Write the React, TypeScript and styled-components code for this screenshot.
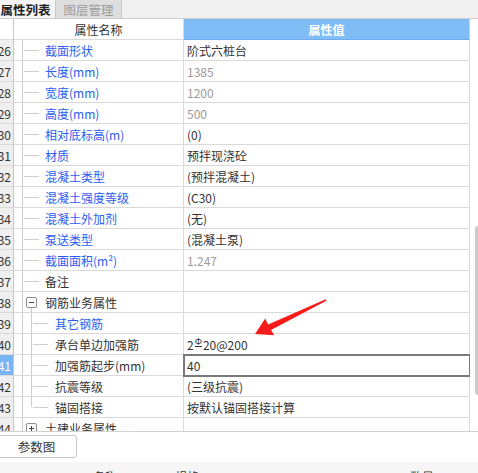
import React from 'react';
import styled, { createGlobalStyle, css } from 'styled-components';

const GRID = '#dadada';
const TREE = '#cdcdcd';

const GlobalStyle = createGlobalStyle`
  html, body {
    margin: 0;
    padding: 0;
    background: #fff;
  }
  body {
    font-family: "Microsoft YaHei", "Noto Sans CJK SC", "Noto Sans", sans-serif;
    font-size: 12px;
    color: #333;
  }
  * {
    box-sizing: border-box;
  }
`;

const Panel = styled.div`
  position: relative;
  width: 478px;
  height: 473px;
  overflow: hidden;
  display: flex;
  flex-direction: column;
  background: #fff;
`;

const TabBar = styled.div`
  flex: none;
  height: 19px;
  display: flex;
  background: #f0f0f0;
  border-bottom: 1px solid #cfcfcf;
`;

const Tab = styled.div<{ $active?: boolean }>`
  display: flex;
  align-items: center;
  justify-content: center;
  border-right: 1px solid #c9c9c9;
  font-size: 12.5px;
  white-space: nowrap;
  ${(p) =>
    p.$active
      ? css`
          width: 60px;
          margin-left: -4px;
          background: #f5f5f5;
          color: #222;
          font-weight: bold;
        `
      : css`
          width: 66px;
          background: #dedede;
          color: #9a9a9a;
        `}
`;

const Grid = styled.div`
  flex: none;
  height: 413px;
  display: flex;
  overflow: hidden;
  border-bottom: 1px solid #d2d2d2;
`;

const Rows = styled.div`
  width: 470px;
  flex: none;
  display: flex;
  flex-direction: column;
  overflow: hidden;
`;

const ScrollTrack = styled.div`
  width: 8px;
  flex: none;
  padding: 207px 0 0 5px;
`;

const ScrollThumb = styled.div`
  width: 4px;
  height: 169px;
  background: #cbcbcb;
  border-radius: 3px 0 0 3px;
`;

const Row = styled.div`
  flex: none;
  height: 21px;
  display: flex;
`;

const NumCell = styled.div<{ $selected?: boolean; $head?: boolean }>`
  width: 14px;
  flex: none;
  display: flex;
  align-items: center;
  justify-content: flex-end;
  padding-right: 2px;
  overflow: hidden;
  white-space: nowrap;
  border-right: 1px solid #c6c6c6;
  border-bottom: 1px solid ${GRID};
  background: ${(p) => (p.$head ? '#fff' : p.$selected ? '#79b5f3' : '#efefef')};
  color: ${(p) => (p.$selected ? '#fff' : '#333')};
`;

const NameHead = styled.div`
  width: 170px;
  flex: none;
  display: flex;
  align-items: center;
  justify-content: center;
  border-right: 1px solid ${GRID};
  border-bottom: 1px solid ${GRID};
  color: #333;
`;

const ValueHead = styled.div`
  width: 286px;
  flex: none;
  display: flex;
  align-items: center;
  justify-content: center;
  background: #80bdf7;
  color: #fff;
  font-weight: bold;
  border-right: 1px solid #d0d0d0;
  border-bottom: 1px solid #6eacee;
`;

const NameCell = styled.div`
  width: 170px;
  flex: none;
  display: flex;
  border-right: 1px solid ${GRID};
  border-bottom: 1px solid ${GRID};
  white-space: nowrap;
  overflow: hidden;
`;

const Indent = styled.span<{ $w: number; $guide?: boolean }>`
  flex: none;
  width: ${(p) => p.$w}px;
  ${(p) =>
    p.$guide &&
    css`
      background: linear-gradient(${TREE}, ${TREE}) 0 0 / 1px 100% no-repeat;
    `}
`;

const Elbow = styled.span<{ $w: number; $last?: boolean }>`
  flex: none;
  width: ${(p) => p.$w}px;
  background:
    linear-gradient(${TREE}, ${TREE}) 0 0 / 1px ${(p) => (p.$last ? '50%' : '100%')} no-repeat,
    linear-gradient(${TREE}, ${TREE}) 2px 50% / 15px 1px no-repeat;
`;

const GroupElbow = styled.span<{ $open?: boolean }>`
  flex: none;
  width: 23px;
  display: flex;
  align-items: center;
  padding-left: 4px;
  background: linear-gradient(${TREE}, ${TREE}) 0 0 / 1px 100% no-repeat
    ${(p) => (p.$open ? `, linear-gradient(${TREE}, ${TREE}) 9px 100% / 1px 50% no-repeat` : '')};
`;

const Toggle = styled.span<{ $open?: boolean }>`
  position: relative;
  width: 11px;
  height: 11px;
  border: 1px solid #8c8c8c;
  border-radius: 2px;
  background: #fff;
  &::before {
    content: '';
    position: absolute;
    left: 2px;
    right: 2px;
    top: 4px;
    height: 1px;
    background: #444;
  }
  ${(p) =>
    !p.$open &&
    css`
      &::after {
        content: '';
        position: absolute;
        top: 2px;
        bottom: 2px;
        left: 4px;
        width: 1px;
        background: #444;
      }
    `}
`;

const Label = styled.span<{ $blue?: boolean }>`
  display: flex;
  align-items: center;
  color: ${(p) => (p.$blue ? '#2b5df2' : '#333')};
`;

const ValueCell = styled.div<{ $muted?: boolean; $editing?: boolean }>`
  width: 286px;
  flex: none;
  display: flex;
  align-items: center;
  padding-left: 3px;
  white-space: nowrap;
  border-right: 1px solid ${GRID};
  border-bottom: 1px solid ${GRID};
  color: ${(p) => (p.$muted ? '#9b9b9b' : '#333')};
  ${(p) =>
    p.$editing &&
    css`
      position: relative;
      z-index: 1;
      outline: 2px solid #7a7a7a;
      outline-offset: -1px;
    `}
`;

// 三级钢符号：小号的Φ，底部加一横
const Rebar = styled.span`
  font-size: 9px;
  line-height: 9px;
  margin: 0 1px;
  position: relative;
  top: -2px;
  border-bottom: 1px solid currentColor;
`;

const ButtonBar = styled.div`
  flex: none;
  height: 30px;
  padding-top: 3px;
  background: #fff;
`;

const Button = styled.div`
  width: 81px;
  height: 23px;
  margin-left: -4px;
  display: flex;
  align-items: center;
  justify-content: center;
  border: 1px solid #c8c8c8;
  border-radius: 3px;
  font-size: 12.5px;
  color: #333;
  background: #fff;
`;

const Strip = styled.div`
  flex: 1;
  display: flex;
  padding-top: 8px;
  line-height: 14px;
  background: #f6f6f6;
  color: #333;
  overflow: hidden;
`;

const StripLabel = styled.span<{ $at: number }>`
  flex: none;
  width: ${(p) => p.$at}px;
  white-space: nowrap;
`;

const Overlay = styled.svg`
  position: absolute;
  left: 0;
  top: 0;
  pointer-events: none;
`;

type Kind = 'leaf' | 'group' | 'child';

interface Attr {
  no: number;
  name: string;
  blue?: boolean;
  value?: React.ReactNode;
  muted?: boolean;
  kind: Kind;
  open?: boolean;
  last?: boolean;
  selected?: boolean;
  editing?: boolean;
}

const attrs: Attr[] = [
  { no: 26, name: '截面形状', blue: true, value: '阶式六桩台', kind: 'leaf' },
  { no: 27, name: '长度(mm)', blue: true, value: '1385', muted: true, kind: 'leaf' },
  { no: 28, name: '宽度(mm)', blue: true, value: '1200', muted: true, kind: 'leaf' },
  { no: 29, name: '高度(mm)', blue: true, value: '500', muted: true, kind: 'leaf' },
  { no: 30, name: '相对底标高(m)', blue: true, value: '(0)', kind: 'leaf' },
  { no: 31, name: '材质', blue: true, value: '预拌现浇砼', kind: 'leaf' },
  { no: 32, name: '混凝土类型', blue: true, value: '(预拌混凝土)', kind: 'leaf' },
  { no: 33, name: '混凝土强度等级', blue: true, value: '(C30)', kind: 'leaf' },
  { no: 34, name: '混凝土外加剂', blue: true, value: '(无)', kind: 'leaf' },
  { no: 35, name: '泵送类型', blue: true, value: '(混凝土泵)', kind: 'leaf' },
  { no: 36, name: '截面面积(m²)', blue: true, value: '1.247', muted: true, kind: 'leaf' },
  { no: 37, name: '备注', kind: 'leaf' },
  { no: 38, name: '钢筋业务属性', kind: 'group', open: true },
  { no: 39, name: '其它钢筋', blue: true, kind: 'child' },
  {
    no: 40,
    name: '承台单边加强筋',
    kind: 'child',
    value: (
      <>
        2<Rebar>Φ</Rebar>20@200
      </>
    ),
  },
  { no: 41, name: '加强筋起步(mm)', value: '40', kind: 'child', selected: true, editing: true },
  { no: 42, name: '抗震等级', value: '(三级抗震)', kind: 'child' },
  { no: 43, name: '锚固搭接', value: '按默认锚固搭接计算', kind: 'child', last: true },
  { no: 44, name: '土建业务属性', kind: 'group' },
];

const TreePrefix = ({ attr }: { attr: Attr }) => {
  if (attr.kind === 'group') {
    return (
      <>
        <Indent $w={8} />
        <GroupElbow $open={attr.open}>
          <Toggle $open={attr.open} />
        </GroupElbow>
      </>
    );
  }
  if (attr.kind === 'child') {
    return (
      <>
        <Indent $w={8} />
        <Indent $w={9} $guide />
        <Elbow $w={24} $last={attr.last} />
      </>
    );
  }
  return (
    <>
      <Indent $w={8} />
      <Elbow $w={23} />
    </>
  );
};

const Arrow = () => (
  <Overlay width={478} height={473} viewBox="0 0 478 473">
    <path
      d="M255 334 L265.2 318.6 L268.1 324.4 L325.7 299.3 L326.4 300.8 L271 329.9 L274.2 335.3 Z"
      fill="#f61c1c"
    />
  </Overlay>
);

export default function App() {
  return (
    <>
      <GlobalStyle />
      <Panel>
        <TabBar>
          <Tab $active>属性列表</Tab>
          <Tab>图层管理</Tab>
        </TabBar>
        <Grid>
          <Rows>
            <Row>
              <NumCell $head />
              <NameHead>属性名称</NameHead>
              <ValueHead>属性值</ValueHead>
            </Row>
            {attrs.map((a) => (
              <Row key={a.no}>
                <NumCell $selected={a.selected}>{a.no}</NumCell>
                <NameCell>
                  <TreePrefix attr={a} />
                  <Label $blue={a.blue}>{a.name}</Label>
                </NameCell>
                <ValueCell $muted={a.muted} $editing={a.editing}>
                  {a.value}
                </ValueCell>
              </Row>
            ))}
          </Rows>
          <ScrollTrack>
            <ScrollThumb />
          </ScrollTrack>
        </Grid>
        <ButtonBar>
          <Button>参数图</Button>
        </ButtonBar>
        <Strip>
          <StripLabel $at={93} />
          <StripLabel $at={82}>名称</StripLabel>
          <StripLabel $at={235}>规格</StripLabel>
          <StripLabel $at={60}>数量</StripLabel>
        </Strip>
        <Arrow />
      </Panel>
    </>
  );
}
